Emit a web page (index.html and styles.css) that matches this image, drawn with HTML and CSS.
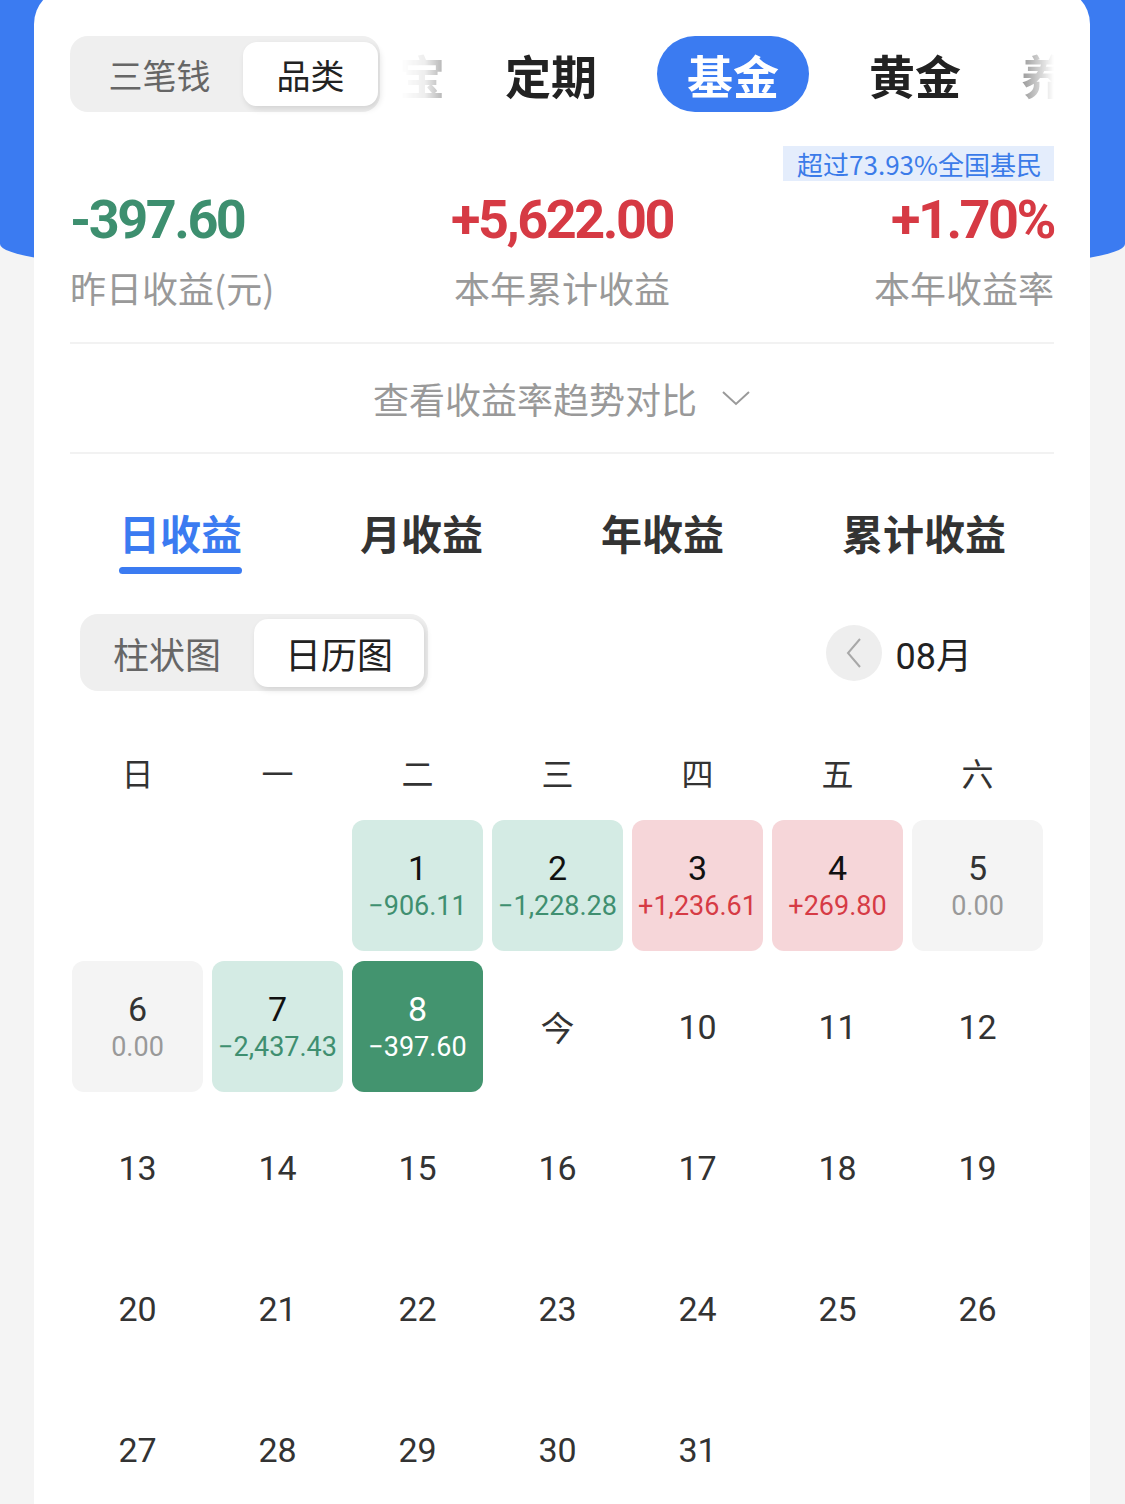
FILE: index.html
```html
<!DOCTYPE html>
<html lang="zh-CN">

<head>
  <meta charset="UTF-8" />
  <meta name="viewport" content="width=device-width, initial-scale=1.0" />
  <title>收益日历</title>
  <link rel="stylesheet" href="styles.css">
</head>

<body>
  <div class="hero"></div>

  <main class="card">
    <div class="top-row">
      <div class="seg seg-top">
        <span class="seg-item">三笔钱</span>
        <span class="seg-item on">品类</span>
      </div>
      <div class="cats">
        <div class="cats-track">
          <span class="cat">活期宝</span>
          <span class="cat">定期</span>
          <span class="cat on">基金</span>
          <span class="cat">黄金</span>
          <span class="cat">养老</span>
        </div>
      </div>
    </div>

    <div class="badge-row">
      <span class="badge">超过73.93%全国基民</span>
    </div>

    <section class="stats">
      <div class="stat">
        <div class="stat-val green">-397.60</div>
        <div class="stat-label">昨日收益(元)</div>
      </div>
      <div class="stat">
        <div class="stat-val red">+5,622.00</div>
        <div class="stat-label">本年累计收益</div>
      </div>
      <div class="stat">
        <div class="stat-val red">+1.70%</div>
        <div class="stat-label">本年收益率</div>
      </div>
    </section>

    <div class="trend">
      查看收益率趋势对比
      <svg class="trend-arrow" width="30" height="18" viewBox="0 0 30 18">
        <polyline points="2,3 15,15 28,3" fill="none" stroke="#9a9a9a" stroke-width="2" />
      </svg>
    </div>

    <nav class="tabs">
      <span class="tab on">日收益</span>
      <span class="tab">月收益</span>
      <span class="tab">年收益</span>
      <span class="tab">累计收益</span>
    </nav>

    <div class="toolbar">
      <div class="seg seg-chart">
        <span class="seg-item">柱状图</span>
        <span class="seg-item on">日历图</span>
      </div>
      <div class="month">
        <span class="month-prev">
          <svg width="18" height="32" viewBox="0 0 18 32">
            <polyline points="15,2 3,16 15,30" fill="none" stroke="#a8a8a8" stroke-width="2" />
          </svg>
        </span>
        <span class="month-label">08月</span>
      </div>
    </div>

    <section class="cal">
      <div class="week">
        <span>日</span><span>一</span><span>二</span><span>三</span><span>四</span><span>五</span><span>六</span>
      </div>
      <div class="days">
        <div class="day"></div>
        <div class="day"></div>
        <div class="day down"><span class="d">1</span><span class="v">−906.11</span></div>
        <div class="day down"><span class="d">2</span><span class="v">−1,228.28</span></div>
        <div class="day up"><span class="d">3</span><span class="v">+1,236.61</span></div>
        <div class="day up"><span class="d">4</span><span class="v">+269.80</span></div>
        <div class="day flat"><span class="d">5</span><span class="v">0.00</span></div>

        <div class="day flat"><span class="d">6</span><span class="v">0.00</span></div>
        <div class="day down"><span class="d">7</span><span class="v">−2,437.43</span></div>
        <div class="day sel"><span class="d">8</span><span class="v">−397.60</span></div>
        <div class="day"><span class="d today">今</span></div>
        <div class="day"><span class="d">10</span></div>
        <div class="day"><span class="d">11</span></div>
        <div class="day"><span class="d">12</span></div>

        <div class="day"><span class="d">13</span></div>
        <div class="day"><span class="d">14</span></div>
        <div class="day"><span class="d">15</span></div>
        <div class="day"><span class="d">16</span></div>
        <div class="day"><span class="d">17</span></div>
        <div class="day"><span class="d">18</span></div>
        <div class="day"><span class="d">19</span></div>

        <div class="day"><span class="d">20</span></div>
        <div class="day"><span class="d">21</span></div>
        <div class="day"><span class="d">22</span></div>
        <div class="day"><span class="d">23</span></div>
        <div class="day"><span class="d">24</span></div>
        <div class="day"><span class="d">25</span></div>
        <div class="day"><span class="d">26</span></div>

        <div class="day"><span class="d">27</span></div>
        <div class="day"><span class="d">28</span></div>
        <div class="day"><span class="d">29</span></div>
        <div class="day"><span class="d">30</span></div>
        <div class="day"><span class="d">31</span></div>
      </div>
    </section>
  </main>
</body>

</html>
```

FILE: styles.css
```css
body {
  margin: 0;
  background: #f4f4f4;
  font-family: "Noto Sans CJK SC", sans-serif;
  color: #222;
}

.hero {
  height: 284px;
  background: #3b7bf1;
  border-radius: 0 0 50% 50% / 0 0 40px 40px;
}

.card {
  position: relative;
  margin: -296px 35px 0 34px;
  padding: 48px 36px 60px;
  background: #fff;
  border-radius: 36px 36px 0 0;
}

/* top row */
.top-row {
  display: flex;
  align-items: center;
  height: 76px;
}

.seg {
  display: flex;
  flex: none;
  background: #efefef;
  border-radius: 18px;
}

.seg-item {
  display: flex;
  align-items: center;
  justify-content: center;
  color: #666;
}

.seg-item.on {
  background: #fff;
  color: #222;
  border-radius: 14px;
  box-shadow: 2px 3px 6px rgba(0, 0, 0, 0.12);
}

.seg-top {
  padding: 6px 2px 6px 6px;
}

.seg-top .seg-item {
  width: 167px;
  height: 64px;
  font-size: 34px;
}

.seg-top .seg-item.on {
  width: 135px;
}

.cats {
  flex: 1;
  margin-left: 20px;
  overflow: hidden;
  -webkit-mask-image: linear-gradient(90deg, transparent 0, rgba(0, 0, 0, 0.08) 25px, #000 90px, #000 calc(100% - 70px), transparent 100%);
  mask-image: linear-gradient(90deg, transparent 0, rgba(0, 0, 0, 0.08) 25px, #000 90px, #000 calc(100% - 70px), transparent 100%);
}

.cats-track {
  display: flex;
  margin-left: -123px;
  white-space: nowrap;
}

.cat {
  flex: none;
  padding: 0 30px;
  font-size: 46px;
  font-weight: 700;
  line-height: 76px;
  color: #222;
}

.cat.on {
  margin: 0 30px;
  background: #3b7bf1;
  color: #fff;
  border-radius: 38px;
}

/* stats */
.badge-row {
  display: flex;
  justify-content: flex-end;
  margin-top: 34px;
}

.badge {
  padding: 0 12px 0 14px;
  font-size: 26px;
  line-height: 35px;
  background: #e4edfc;
  color: #3b7be9;
}

.stats {
  display: grid;
  grid-template-columns: repeat(3, 1fr);
  padding-bottom: 33px;
  border-bottom: 2px solid #f2f2f2;
}

.stat:nth-child(2) {
  text-align: center;
}

.stat:nth-child(3) {
  text-align: right;
}

.stat-val {
  margin-top: 9px;
  font-family: Roboto, sans-serif;
  font-weight: 700;
  font-size: 54px;
  line-height: 60px;
  letter-spacing: -2.5px;
}

.green {
  color: #3d8f6f;
}

.red {
  color: #d63a44;
}

.stat-label {
  margin-top: 15px;
  font-size: 36px;
  line-height: 44px;
  color: #999;
}

.trend {
  display: flex;
  align-items: center;
  justify-content: center;
  height: 108px;
  font-size: 36px;
  color: #999;
  border-bottom: 2px solid #f2f2f2;
}

.trend-arrow {
  margin-left: 24px;
}

/* tabs */
.tabs {
  display: flex;
  justify-content: space-between;
  padding: 50px 45px 0 46px;
}

.tab {
  padding: 0 3px;
  font-size: 41px;
  font-weight: 700;
  line-height: 56px;
  color: #333;
}

.tab.on {
  color: #3b7bf1;
}

.tab.on::after {
  content: "";
  display: block;
  height: 7px;
  margin-top: 7px;
  background: #3b7bf1;
  border-radius: 4px;
}

/* chart toggle + month */
.toolbar {
  display: flex;
  align-items: center;
  justify-content: space-between;
  margin-top: 40px;
  padding: 0 82px 0 10px;
}

.seg-chart {
  padding: 5px 4px 4px 0;
}

.seg-chart .seg-item {
  width: 174px;
  height: 68px;
  font-size: 36px;
}

.seg-chart .seg-item.on {
  width: 170px;
}

.month {
  display: flex;
  align-items: center;
}

.month-prev {
  display: flex;
  align-items: center;
  justify-content: center;
  width: 56px;
  height: 56px;
  border-radius: 50%;
  background: #eee;
}

.month-label {
  margin-left: 14px;
  font-family: Roboto, "Noto Sans CJK SC", sans-serif;
  font-size: 36px;
  color: #222;
}

/* calendar */
.cal {
  margin: 46px 11px 0 2px;
}

.week {
  display: grid;
  grid-template-columns: repeat(7, 131px);
  column-gap: 9px;
  height: 70px;
  align-items: center;
  text-align: center;
  font-size: 32px;
  color: #333;
}

.days {
  display: grid;
  grid-template-columns: repeat(7, 131px);
  grid-auto-rows: 131px;
  gap: 10px 9px;
  margin-top: 13px;
}

.day {
  display: flex;
  flex-direction: column;
  align-items: center;
  justify-content: center;
  border-radius: 12px;
  font-family: Roboto, "Noto Sans CJK SC", sans-serif;
}

.d {
  font-size: 34px;
  line-height: 40px;
  color: #333;
}

.today {
  font-family: "Noto Sans CJK SC", sans-serif;
}

.v {
  font-size: 27px;
  line-height: 36px;
}

.up {
  background: #f6d6d9;
}

.up .v {
  color: #d63b45;
}

.down {
  background: #d4ebe4;
}

.down .v {
  color: #3f8f70;
}

.up .d,
.down .d {
  color: #111;
}

.flat {
  background: #f4f4f4;
}

.flat .v {
  color: #999;
}

.sel {
  background: #43946f;
}

.sel .d,
.sel .v {
  color: #fff;
}
```
